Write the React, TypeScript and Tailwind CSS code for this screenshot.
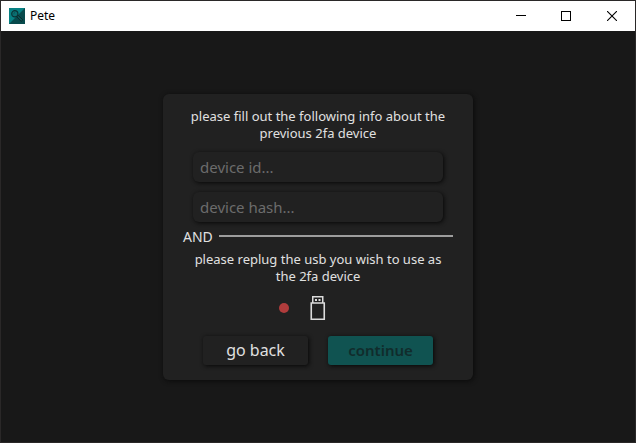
import { useState } from "react";

function AppLogo() {
  return (
    <svg width="16" height="16" viewBox="0 0 16 16" aria-hidden="true">
      <rect width="16" height="16" fill="#078183" />
      <path d="M16 0V16H0Z" fill="#084a4c" />
      <circle cx="5.8" cy="5.8" r="3.1" fill="#0a6f71" stroke="#0b3436" strokeWidth="1.2" />
      <path d="M7.8 8.8 9.2 7.4 13.8 11.8 12.2 13.4Z" fill="#0a5557" stroke="#0b292b" strokeWidth="1" />
      <path d="M4.5 5.8 6 4.4" stroke="#0b4f51" strokeWidth="1" />
    </svg>
  );
}

function TitleBar() {
  return (
    <header className="flex h-[30px] items-center bg-white pl-2 text-black">
      <AppLogo />
      <h1 className="ml-[5px] flex-1 text-[12px] leading-4">Pete</h1>
      <button type="button" aria-label="Minimize" className="flex h-full w-[45px] items-center justify-center">
        <svg width="10" height="10" viewBox="0 0 10 10" shapeRendering="crispEdges">
          <path d="M0 4.5H10" stroke="#000" />
        </svg>
      </button>
      <button type="button" aria-label="Maximize" className="flex h-full w-[46px] items-center justify-center">
        <svg width="10" height="10" viewBox="0 0 10 10" shapeRendering="crispEdges">
          <path d="M.5.5H9.5V9.5H.5Z" fill="none" stroke="#000" />
        </svg>
      </button>
      <button type="button" aria-label="Close" className="flex h-full w-[46px] items-center justify-center">
        <svg width="10" height="10" viewBox="0 0 10 10">
          <path d="M0 0 10 10M10 0 0 10" fill="none" stroke="#000" strokeWidth="1.1" />
        </svg>
      </button>
    </header>
  );
}

function UsbIcon() {
  return (
    <svg width="16" height="24" viewBox="0 0 16 24" fill="none" role="img" aria-label="usb">
      <path d="M2.75 7V.75H12.75V7" stroke="#dcdcdc" strokeWidth="1.5" />
      <path d="M1.25 7H14.25V23.2H1.25Z" stroke="#dcdcdc" strokeWidth="1.6" />
      <path d="M5 3H7V5H5ZM8.5 3H10.5V5H8.5Z" fill="#dcdcdc" />
    </svg>
  );
}

const fieldClass =
  "h-[30px] w-full rounded-md bg-[#212121] px-[7px] text-[15px] text-[#e0e0e0] shadow-[1px_1px_4px_#080808] outline-none placeholder:text-[#6c6c6c]";

export default function App() {
  const [id, setId] = useState("");
  const [hash, setHash] = useState("");

  return (
    <div className="flex min-h-screen flex-col border border-[#2a2828] bg-[#181818] font-['Noto_Sans','Open_Sans',sans-serif]">
      <TitleBar />
      <main className="flex flex-1 items-center justify-center">
        <form
          className="flex w-[310px] flex-col rounded-md bg-[#212121] px-5 pt-3.5 pb-[15px] text-[13px] leading-[17px] text-[#e0e0e0] shadow-[1px_1px_5px_#0a0a0a]"
          onSubmit={(event) => event.preventDefault()}
        >
          <p className="text-center">
            please fill out the following info about the previous 2fa device
          </p>
          <div className="mt-2.5 flex flex-col gap-2.5 px-2.5">
            <input
              aria-label="device id"
              placeholder="device id..."
              className={fieldClass}
              value={id}
              onChange={(event) => setId(event.target.value)}
            />
            <input
              aria-label="device hash"
              placeholder="device hash..."
              className={fieldClass}
              value={hash}
              onChange={(event) => setHash(event.target.value)}
            />
          </div>
          <div className="mt-1.5 flex items-center gap-1.5">
            <span className="text-[14px] leading-[17px]">AND</span>
            <span className="h-0.5 flex-1 bg-[#9d9d9d]" />
          </div>
          <p className="mt-1.5 px-2 text-center">
            please replug the usb you wish to use as the 2fa device
          </p>
          <div className="mt-[11px] flex items-center justify-center gap-[21px] pr-8">
            <span className="size-2.5 rounded-full bg-[#b03c3c]" />
            <UsbIcon />
          </div>
          <div className="mt-4 flex justify-center gap-5">
            <button
              type="button"
              className="h-[29px] w-[105px] rounded-[3px] bg-[#212121] text-[16px] shadow-[1px_1px_4px_#080808]"
            >
              go back
            </button>
            <button
              type="submit"
              className="h-[29px] w-[105px] rounded-[3px] bg-[#105351] text-[15px] font-semibold text-[#112c2c] shadow-[1px_1px_4px_#080808]"
            >
              continue
            </button>
          </div>
        </form>
      </main>
    </div>
  );
}
